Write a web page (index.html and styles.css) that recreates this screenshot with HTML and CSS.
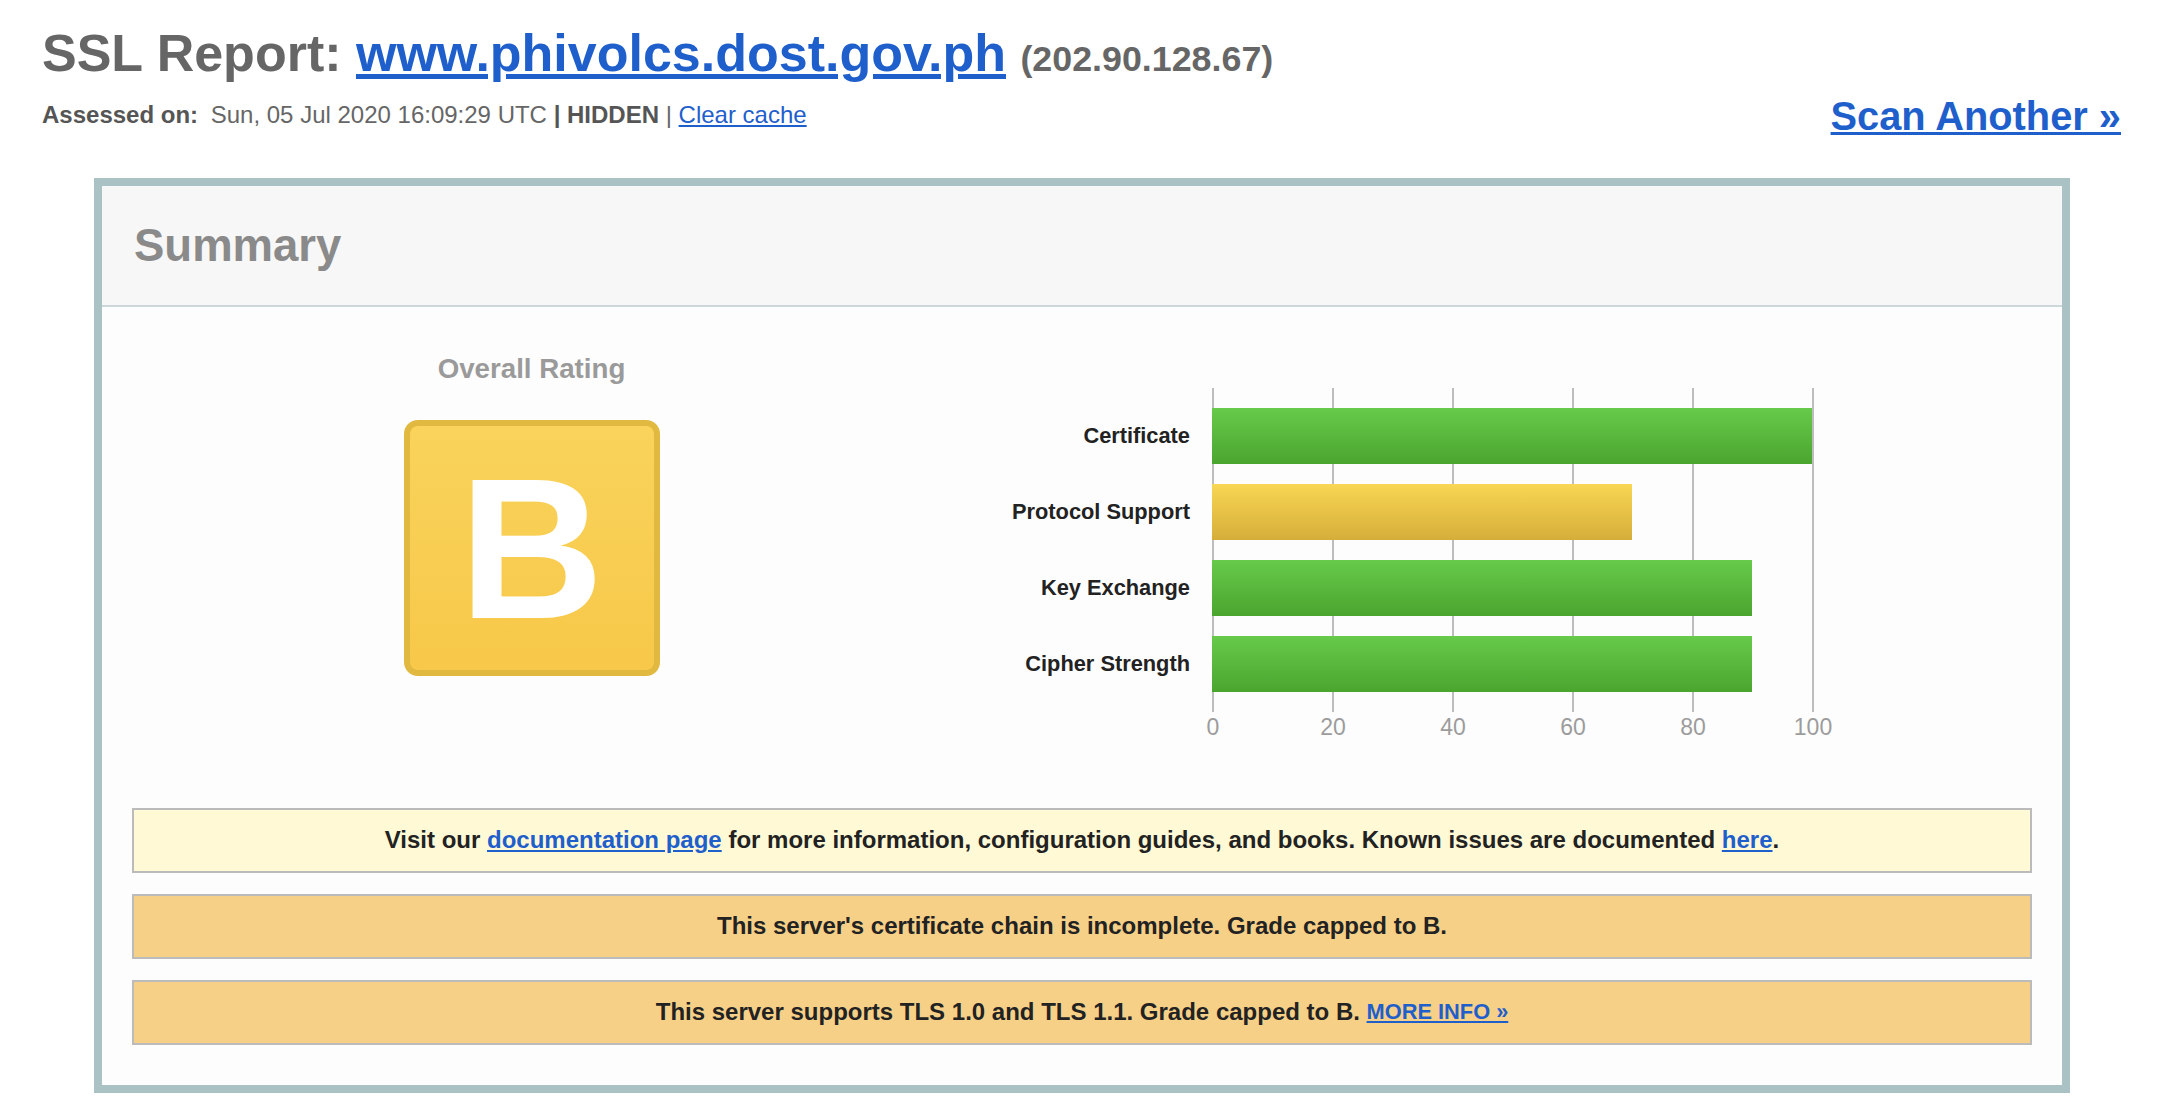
FILE: index.html
```html
<!DOCTYPE html>
<html lang="en">
<head>
<meta charset="utf-8">
<title>SSL Report: www.phivolcs.dost.gov.ph</title>
<link rel="stylesheet" href="styles.css">
</head>
<body>
<div class="top">
  <div class="top-left">
    <h1 class="title">SSL Report: <a href="#">www.phivolcs.dost.gov.ph</a> <span class="ip">(202.90.128.67)</span></h1>
    <div class="assessed"><span class="lbl">Assessed on:</span> Sun, 05 Jul 2020 16:09:29 UTC <b>| HIDDEN</b> | <a href="#">Clear cache</a></div>
  </div>
  <a class="scan" href="#">Scan Another &raquo;</a>
</div>

<div class="box">
  <div class="box-head">Summary</div>
  <div class="box-body">
    <div class="summary">
      <div class="rating">
        <div class="rating-title">Overall Rating</div>
        <div class="grade">B</div>
      </div>
      <div class="chart">
        <div class="labels">
          <div class="lab">Certificate</div>
          <div class="lab">Protocol Support</div>
          <div class="lab">Key Exchange</div>
          <div class="lab">Cipher Strength</div>
        </div>
        <div class="plot-wrap">
          <div class="plot">
            <div class="bar green" style="width:600px"></div>
            <div class="bar yellow" style="width:420px"></div>
            <div class="bar green" style="width:540px"></div>
            <div class="bar green" style="width:540px"></div>
          </div>
          <div class="axis"><span>0</span><span>20</span><span>40</span><span>60</span><span>80</span><span>100</span></div>
        </div>
      </div>
    </div>
    <div class="notices">
      <div class="notice info">Visit our&nbsp;<a href="#">documentation page</a>&nbsp;for more information, configuration guides, and books. Known issues are documented&nbsp;<a href="#">here</a>.</div>
      <div class="notice warn">This server's certificate chain is incomplete. Grade capped to B.</div>
      <div class="notice warn">This server supports TLS 1.0 and TLS 1.1. Grade capped to B.&nbsp;<a class="more" href="#">MORE INFO &raquo;</a></div>
    </div>
  </div>
</div>
</body>
</html>
```

FILE: styles.css
```css
* { box-sizing: border-box; }
html, body { margin: 0; padding: 0; background: #ffffff; }
body { font-family: "Liberation Sans", Arial, Helvetica, sans-serif; color: #222; }
a { color: #1f5fcc; }

.top {
  display: flex;
  justify-content: space-between;
  align-items: flex-start;
  padding: 27px 47px 0 42px;
}
.title {
  margin: 0;
  font-size: 52px;
  line-height: 1;
  font-weight: bold;
  color: #666;
  white-space: nowrap;
}
.title .ip { font-size: 35.8px; color: #666; }
.assessed {
  margin-top: 24px;
  font-size: 24px;
  line-height: 1;
  color: #666;
  white-space: nowrap;
}
.assessed .lbl { font-weight: bold; color: #555; padding-right: 6px; }
.assessed b { color: #555; }
.scan {
  margin-top: 70px;
  font-size: 39.8px;
  line-height: 1;
  font-weight: bold;
  white-space: nowrap;
}

.box {
  margin: 41px 98px 0 94px;
  border: 8px solid #abc2c5;
  background: #fdfdfd;
}
.box-head {
  height: 121px;
  padding: 37px 32px 0;
  background: #f7f7f7;
  border-bottom: 2px solid #cbd7d9;
  font-size: 45.5px;
  line-height: 1;
  font-weight: bold;
  color: #8a8a8a;
}
.box-body { padding: 0 30px 40px; }

.summary { display: flex; align-items: flex-start; }
.rating {
  width: 799px;
  padding-top: 48px;
  display: flex;
  flex-direction: column;
  align-items: center;
}
.rating-title {
  font-size: 27.7px;
  line-height: 1;
  font-weight: bold;
  color: #9a9a9a;
}
.grade {
  margin-top: 37px;
  width: 256px;
  height: 256px;
  border: 6px solid #e1b940;
  border-radius: 14px;
  background: linear-gradient(#f9d35b, #f7c849);
  display: flex;
  align-items: center;
  justify-content: center;
  color: #fff;
  font-size: 200px;
  line-height: 1;
  font-weight: bold;
  padding-top: 2px;
}

.chart { display: flex; padding-top: 81px; }
.labels {
  width: 259px;
  padding-top: 20px;
  display: flex;
  flex-direction: column;
  gap: 20px;
  margin-right: 22px;
}
.lab {
  height: 56px;
  display: flex;
  align-items: center;
  justify-content: flex-end;
  font-size: 21.8px;
  font-weight: bold;
  color: #222;
  white-space: nowrap;
}
.plot-wrap { width: 602px; }
.plot {
  height: 324px;
  padding: 20px 0;
  display: flex;
  flex-direction: column;
  gap: 20px;
  background: repeating-linear-gradient(to right, #bdbdbd 0 2px, transparent 2px 120px);
}
.bar { height: 56px; }
.bar.green { background: linear-gradient(#67ca4a, #4aa52f); }
.bar.yellow { background: linear-gradient(#f9d653, #d5ae3a); }
.axis {
  display: flex;
  margin-left: -59px;
  margin-top: 4px;
  font-size: 23px;
  line-height: 1;
  color: #9c9c9c;
}
.axis span { width: 120px; text-align: center; flex: none; }

.notices {
  margin-top: 69px;
  display: flex;
  flex-direction: column;
  gap: 21px;
}
.notice {
  height: 65px;
  border: 2px solid #bbbbbb;
  display: flex;
  align-items: center;
  justify-content: center;
  font-size: 24px;
  line-height: 1;
  font-weight: bold;
  color: #222;
  white-space: nowrap;
}
.notice.info { background: #fff9d6; }
.notice.warn { background: #f7d088; }
.notice .more { font-size: 21.8px; }
```
